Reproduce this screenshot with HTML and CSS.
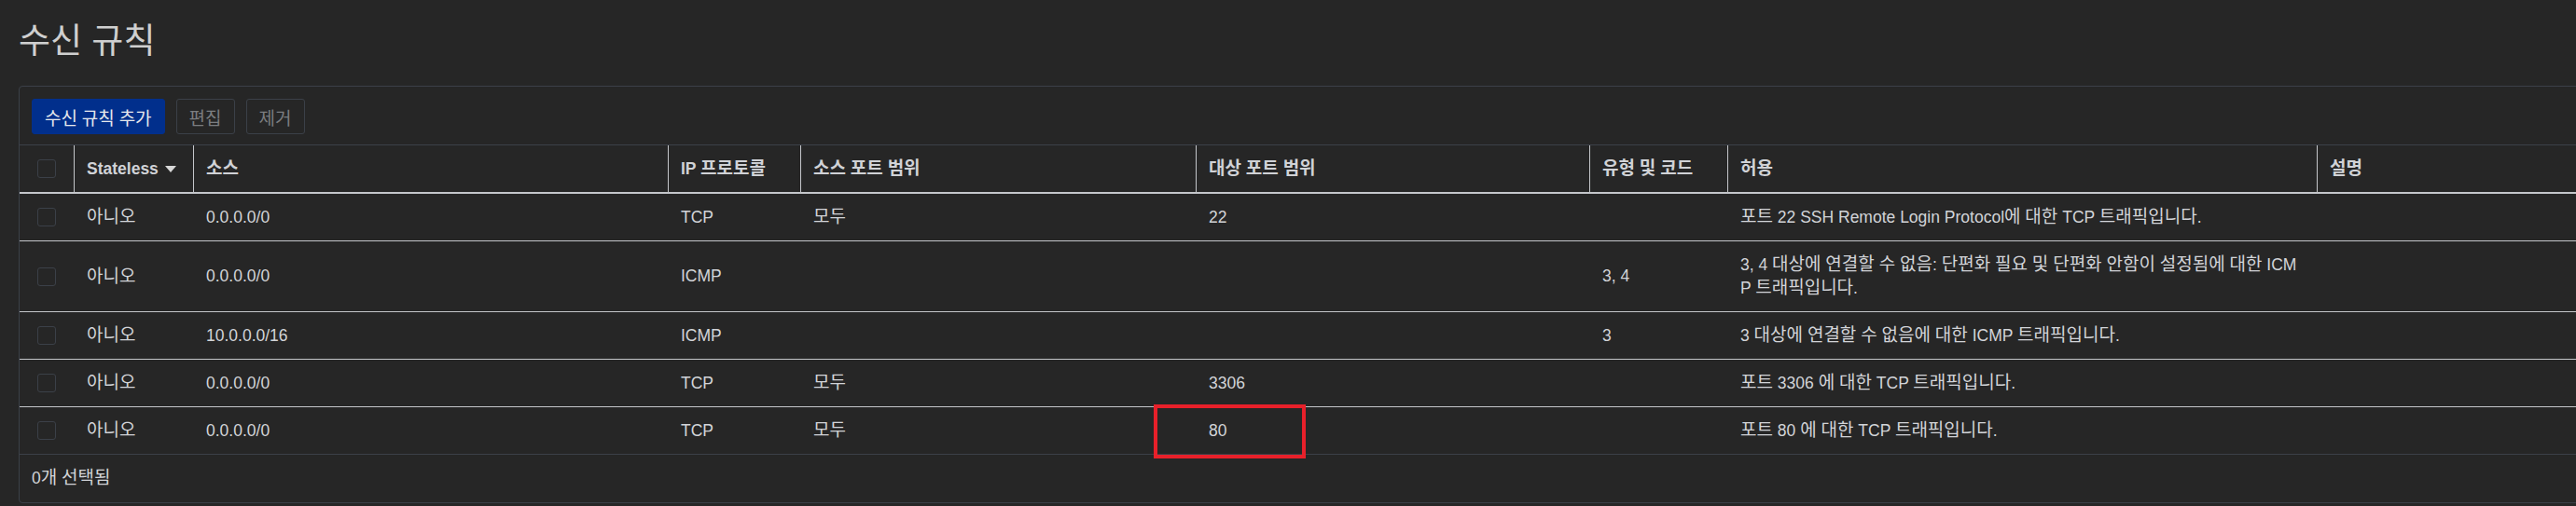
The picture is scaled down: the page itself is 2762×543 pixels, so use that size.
FILE: index.html
```html
<!DOCTYPE html>
<html lang="ko">
<head>
<meta charset="utf-8">
<title>수신 규칙</title>
<link rel="stylesheet" href="styles.css">
</head>
<body>
<div class="page">
  <h1 class="title">수신 규칙</h1>
  <section class="panel">
    <div class="toolbar">
      <button class="btn btn-primary">수신 규칙 추가</button>
      <button class="btn btn-disabled">편집</button>
      <button class="btn btn-disabled">제거</button>
    </div>
    <div class="grid">
      <div class="row head">
        <div class="cell cb"><span class="checkbox"></span></div>
        <div class="cell th">Stateless<svg class="caret" width="12" height="8" viewBox="0 0 12 8"><polygon points="0,0 12,0 6,7" fill="#d8d8d8"/></svg></div>
        <div class="cell th"><span class="ko">소스</span></div>
        <div class="cell th"><span>IP <span class="ko">프로토콜</span></span></div>
        <div class="cell th"><span class="ko">소스 포트 범위</span></div>
        <div class="cell th"><span class="ko">대상 포트 범위</span></div>
        <div class="cell th"><span class="ko">유형 및 코드</span></div>
        <div class="cell th"><span class="ko">허용</span></div>
        <div class="cell th"><span class="ko">설명</span></div>
      </div>
      <div class="row">
        <div class="cell cb"><span class="checkbox"></span></div>
        <div class="cell"><span class="ko">아니오</span></div>
        <div class="cell">0.0.0.0/0</div>
        <div class="cell">TCP</div>
        <div class="cell"><span class="ko">모두</span></div>
        <div class="cell">22</div>
        <div class="cell"></div>
        <div class="cell wrap"><span><span class="ko">포트</span> 22 SSH Remote Login Protocol<span class="ko">에 대한</span> TCP <span class="ko">트래픽입니다</span>.</span></div>
        <div class="cell"></div>
      </div>
      <div class="row">
        <div class="cell cb"><span class="checkbox"></span></div>
        <div class="cell"><span class="ko">아니오</span></div>
        <div class="cell">0.0.0.0/0</div>
        <div class="cell">ICMP</div>
        <div class="cell"></div>
        <div class="cell"></div>
        <div class="cell">3, 4</div>
        <div class="cell wrap"><span>3, 4 <span class="ko">대상에 연결할 수 없음</span>: <span class="ko">단편화 필요 및 단편화 안함이 설정됨에 대한</span> ICMP <span class="ko">트래픽입니다</span>.</span></div>
        <div class="cell"></div>
      </div>
      <div class="row">
        <div class="cell cb"><span class="checkbox"></span></div>
        <div class="cell"><span class="ko">아니오</span></div>
        <div class="cell">10.0.0.0/16</div>
        <div class="cell">ICMP</div>
        <div class="cell"></div>
        <div class="cell"></div>
        <div class="cell">3</div>
        <div class="cell wrap"><span>3 <span class="ko">대상에 연결할 수 없음에 대한</span> ICMP <span class="ko">트래픽입니다</span>.</span></div>
        <div class="cell"></div>
      </div>
      <div class="row">
        <div class="cell cb"><span class="checkbox"></span></div>
        <div class="cell"><span class="ko">아니오</span></div>
        <div class="cell">0.0.0.0/0</div>
        <div class="cell">TCP</div>
        <div class="cell"><span class="ko">모두</span></div>
        <div class="cell">3306</div>
        <div class="cell"></div>
        <div class="cell wrap"><span><span class="ko">포트</span> 3306 <span class="ko">에 대한</span> TCP <span class="ko">트래픽입니다</span>.</span></div>
        <div class="cell"></div>
      </div>
      <div class="row last">
        <div class="cell cb"><span class="checkbox"></span></div>
        <div class="cell"><span class="ko">아니오</span></div>
        <div class="cell">0.0.0.0/0</div>
        <div class="cell">TCP</div>
        <div class="cell"><span class="ko">모두</span></div>
        <div class="cell marked">80<span class="highlight"></span></div>
        <div class="cell"></div>
        <div class="cell wrap"><span><span class="ko">포트</span> 80 <span class="ko">에 대한</span> TCP <span class="ko">트래픽입니다</span>.</span></div>
        <div class="cell"></div>
      </div>
    </div>
    <div class="footer">0<span class="ko">개 선택됨</span></div>
  </section>
</div>
</body>
</html>
```

FILE: styles.css
```css
html, body {
  margin: 0;
  padding: 0;
  overflow: hidden;
  background: #262626;
}

body {
  font-family: "Liberation Sans", "Noto Sans CJK KR", sans-serif;
  font-size: 17.5px;
  color: #d2d4d8;
}

.ko {
  font-size: 19px;
  line-height: 20px;
  word-spacing: -0.42px;
}

.page {
  padding: 0 0 0 20px;
}

.title {
  margin: 0;
  padding-top: 23px;
  font-size: 37px;
  line-height: 44px;
  font-weight: 400;
  color: #cfcfcf;
}

.panel {
  margin-top: 25px;
  margin-right: -40px;
  border: 1px solid #3b4048;
  border-radius: 4px;
}

.toolbar {
  display: flex;
  gap: 12px;
  padding: 13px 13px 11px;
  border-bottom: 1px solid #3b4048;
}

.btn {
  height: 38px;
  padding: 0 13px;
  font-family: inherit;
  font-size: 19px;
  word-spacing: -0.42px;
  border-radius: 3px;
  border: 1px solid transparent;
  background: transparent;
}

.btn-primary {
  background: #012f8c;
  border-color: #012f8c;
  color: #e6e8ec;
}

.btn-disabled {
  border-color: #3b4048;
  color: #7b7d80;
}

.grid {
  display: grid;
  grid-template-columns: 58px 128px 509px 142px 424px 422px 148px 632px 1fr;
}

.row {
  display: contents;
}

.cell {
  display: flex;
  align-items: center;
  min-height: 25px;
  padding: 12.5px 14px;
  line-height: 25px;
  border-bottom: 1px solid #c4c6ca;
}

.row.last .cell {
  border-bottom-color: #3b4048;
}

.head .cell {
  height: 50px;
  padding-top: 0;
  padding-bottom: 0;
  border-bottom: 2px solid #c4c6ca;
}

.th {
  border-left: 1px solid #c4c6ca;
  padding-left: 13px;
  font-weight: 700;
  color: #d0d2d6;
}

.cell.cb {
  justify-content: center;
  padding-left: 0;
  padding-right: 0;
}

.checkbox {
  width: 20px;
  height: 20px;
  box-sizing: border-box;
  border: 1px solid #3b4048;
  border-radius: 3px;
}

.caret {
  margin-left: 7px;
  margin-top: 1px;
}

.wrap {
  word-break: break-all;
}

.marked {
  position: relative;
}

.highlight {
  position: absolute;
  left: -45px;
  top: -3px;
  width: 163px;
  height: 58px;
  box-sizing: border-box;
  border: 4px solid #e8202a;
}

.footer {
  height: 51px;
  line-height: 51px;
  padding-left: 13px;
}
```
